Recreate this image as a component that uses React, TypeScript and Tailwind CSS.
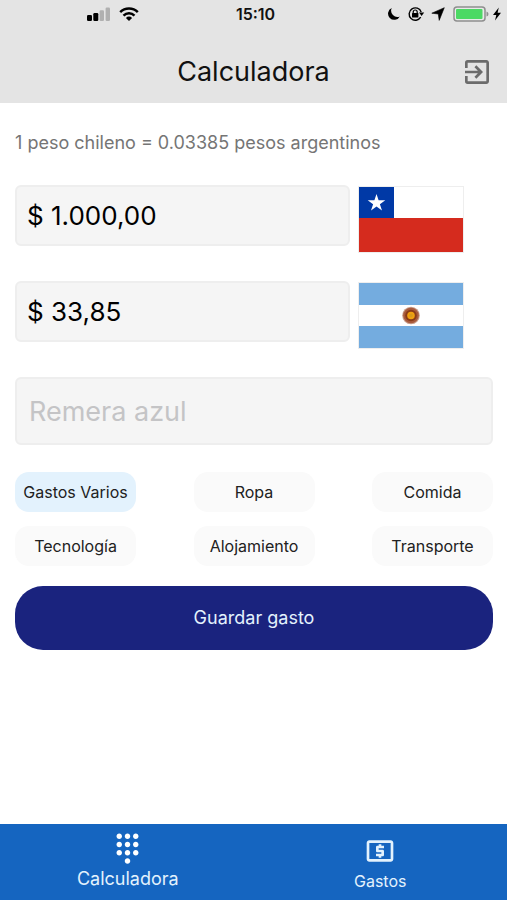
import { useState } from "react";
import type { ReactNode } from "react";
import { MdDialpad, MdExitToApp, MdLocalAtm } from "react-icons/md";

const RATE = 0.03385;
const CATEGORIES = ["Gastos Varios", "Ropa", "Comida", "Tecnología", "Alojamiento", "Transporte"];

function StatusBar() {
  return (
    <div className="grid h-7 grid-cols-3 items-center">
      <div className="flex items-center justify-end gap-2 pr-[30px]">
        <svg width="24" height="14" viewBox="0 0 24 14" aria-hidden="true">
          <rect x="0" y="8" width="5" height="6" rx="1.2" />
          <rect x="6.3" y="6" width="5" height="8" rx="1.2" />
          <rect x="12.6" y="3.2" width="4.4" height="10.8" rx="1.2" fill="#b0b0b0" />
          <rect x="18.6" y="0.5" width="4.4" height="13.5" rx="1.2" fill="#b0b0b0" />
        </svg>
        <svg width="20" height="14" viewBox="0 0 20 14" fill="none" stroke="#000" strokeWidth="2.5" aria-hidden="true">
          <path d="M1.2 5.2C6 .3 14 .3 18.8 5.2" />
          <path d="M4.5 8.6c3.1-3 7.900-3 11 0" />
          <path d="M10 14 6.900 10.900a4.400 4.400 0 0 1 6.200 0Z" fill="#000" stroke="none" />
        </svg>
      </div>
      <time className="pl-1 text-center text-base leading-5 font-semibold">15:10</time>
      <div className="flex items-center justify-end gap-1 pr-1.5">
        <svg width="14" height="14" viewBox="0 0 14 14" aria-hidden="true">
          <path d="M4.700 1A6.200 6.200 0 1 0 12.800 9.400 6.300 6.300 0 0 1 4.700 1Z" />
        </svg>
        <svg className="ml-0.5" width="18" height="16" viewBox="0 0 18 16" aria-hidden="true">
          <path d="M13.700 11.200A6.200 6.200 0 1 1 14.200 6" fill="none" stroke="#000" strokeWidth="1.400" />
          <path d="M12 6.600h5.200L14.600 9.900Z" />
          <rect x="5" y="7" width="6.400" height="4.600" rx=".6" />
          <path d="M6.200 7.500V6a2 2 0 0 1 4 0v1.500" fill="none" stroke="#000" strokeWidth="1.200" />
        </svg>
        <svg className="mr-1 ml-0.5" width="14" height="14" viewBox="0 0 14 14" aria-hidden="true">
          <path d="M13.300.7 8.200 13.400 7.300 7 .8 6.200Z" stroke="#000" strokeWidth=".6" />
        </svg>
        <svg width="36" height="16" viewBox="0 0 36 16" aria-hidden="true">
          <rect x="1" y="1" width="31" height="14" rx="3" fill="#e9e9e9" stroke="#8e8e8e" strokeWidth="1.500" />
          <rect x="3" y="3" width="26.500" height="10" rx="1" fill="#4cd964" />
          <path d="M33.500 5.500q2 .5 2 2.500t-2 2.500Z" fill="#8e8e8e" />
        </svg>
        <svg width="8" height="14" viewBox="0 0 8 14" aria-hidden="true">
          <path d="M5.800.5 0 8h3.300L2 13.500 8 5.800H4.600Z" />
        </svg>
      </div>
    </div>
  );
}

function ChileFlag() {
  return (
    <svg className="block h-full w-full" viewBox="0 0 104 65" preserveAspectRatio="none" role="img" aria-label="Chile">
      <rect width="104" height="65" fill="#fff" />
      <rect y="31" width="104" height="34" fill="#d52b1e" />
      <rect width="35" height="31" fill="#0039a6" />
      <path d="m17.500 7 2.100 6.300h6.700l-5.400 3.900 2.100 6.300-5.500-3.900-5.500 3.900 2.100-6.300-5.400-3.900h6.700Z" fill="#fff" />
    </svg>
  );
}

function ArgentinaFlag() {
  return (
    <svg className="block h-full w-full" viewBox="0 0 104 65" preserveAspectRatio="none" role="img" aria-label="Argentina">
      <rect width="104" height="65" fill="#74acdf" />
      <rect y="22" width="104" height="21" fill="#fff" />
      <circle cx="52" cy="32.500" r="8.800" fill="#c99e8a" />
      <circle cx="52" cy="32.500" r="7.800" fill="#a85a3c" />
      <circle cx="52" cy="32.500" r="5.800" fill="#8a3b17" />
      <circle cx="52" cy="32.500" r="3.800" fill="#f0a010" />
      <circle cx="52" cy="32.500" r="1.800" fill="#d99a1c" />
    </svg>
  );
}

type AmountProps = { label: string; value: string; onChange: (value: string) => void; flag: ReactNode };

function AmountRow({ label, value, onChange, flag }: AmountProps) {
  return (
    <div className="flex gap-2">
      <input
        aria-label={label}
        value={value}
        onChange={(e) => onChange(e.target.value)}
        className="h-[61px] w-[70%] rounded-md border-2 border-[#eeeeee] bg-[#f5f5f5] px-2.5 text-[26px] text-black outline-none"
      />
      <div className="mt-px h-[67px] w-[106px] border border-[#eeeeee]">{flag}</div>
    </div>
  );
}

const parse = (text: string) => Number(text.replace(/[^\d,]/g, "").replace(",", ".")) || 0;
const format = (amount: number) => {
  const [whole, cents] = amount.toFixed(2).split(".");
  return `$ ${whole.replace(/\B(?=(\d{3})+$)/g, ".")},${cents}`;
};

export default function App() {
  const [clp, setClp] = useState("$ 1.000,00");
  const [ars, setArs] = useState("$ 33,85");
  const [detail, setDetail] = useState("");
  const [category, setCategory] = useState(CATEGORIES[0]);

  return (
    <div className="flex min-h-screen flex-col bg-white font-['Inter',sans-serif] text-[#111]">
      <header className="bg-[#e4e4e4]">
        <StatusBar />
        <div className="grid grid-cols-[1fr_auto_1fr] items-center px-[14px] pt-7 pb-[15px]">
          <h1 className="col-start-2 text-[27px] leading-8">Calculadora</h1>
          <button type="button" aria-label="Salir" className="justify-self-end text-[#6b6b6b]">
            <MdExitToApp size={32} />
          </button>
        </div>
      </header>

      <main className="flex-1 pt-7 pr-[14px] pl-[15px]">
        <p className="text-lg leading-6 text-[#757575]">1 peso chileno = 0.03385 pesos argentinos</p>
        <form className="mt-[30px]" onSubmit={(e) => e.preventDefault()}>
          <div className="flex flex-col gap-7">
            <AmountRow
              label="Pesos chilenos"
              value={clp}
              onChange={(v) => {
                setClp(v);
                setArs(format(parse(v) * RATE));
              }}
              flag={<ChileFlag />}
            />
            <AmountRow
              label="Pesos argentinos"
              value={ars}
              onChange={(v) => {
                setArs(v);
                setClp(format(parse(v) / RATE));
              }}
              flag={<ArgentinaFlag />}
            />
            <input
              aria-label="Detalle del gasto"
              placeholder="Remera azul"
              value={detail}
              onChange={(e) => setDetail(e.target.value)}
              className="h-[68px] w-full rounded-md border-2 border-[#eeeeee] bg-[#f5f5f5] px-3 text-[27px] outline-none placeholder:text-[#c4c4c6]"
            />
          </div>
          <div className="mt-[27px] grid grid-cols-[repeat(3,121px)] justify-between gap-y-[14px]">
            {CATEGORIES.map((name) => (
              <button
                key={name}
                type="button"
                aria-pressed={name === category}
                onClick={() => setCategory(name)}
                className={`h-10 rounded-[14px] text-base whitespace-nowrap text-[#212121] ${
                  name === category ? "bg-[#e3f2fd]" : "bg-[#fafafa]"
                }`}
              >
                {name}
              </button>
            ))}
          </div>
          <button type="submit" className="mt-5 h-16 w-full rounded-[28px] bg-[#1a237e] text-lg text-[#e3f2fd]">
            Guardar gasto
          </button>
        </form>
      </main>

      <nav className="grid h-[76px] grid-cols-2 bg-[#1565c0] text-[#e3f2fd]">
        <a href="#calculadora" aria-current="page" className="flex flex-col items-center justify-center pl-0.5">
          <MdDialpad size={33} color="#fff" />
          <span className="text-lg leading-7">Calculadora</span>
        </a>
        <a href="#gastos" className="flex flex-col items-center justify-center pt-1.5">
          <MdLocalAtm size={32} />
          <span className="text-base leading-7">Gastos</span>
        </a>
      </nav>
    </div>
  );
}
